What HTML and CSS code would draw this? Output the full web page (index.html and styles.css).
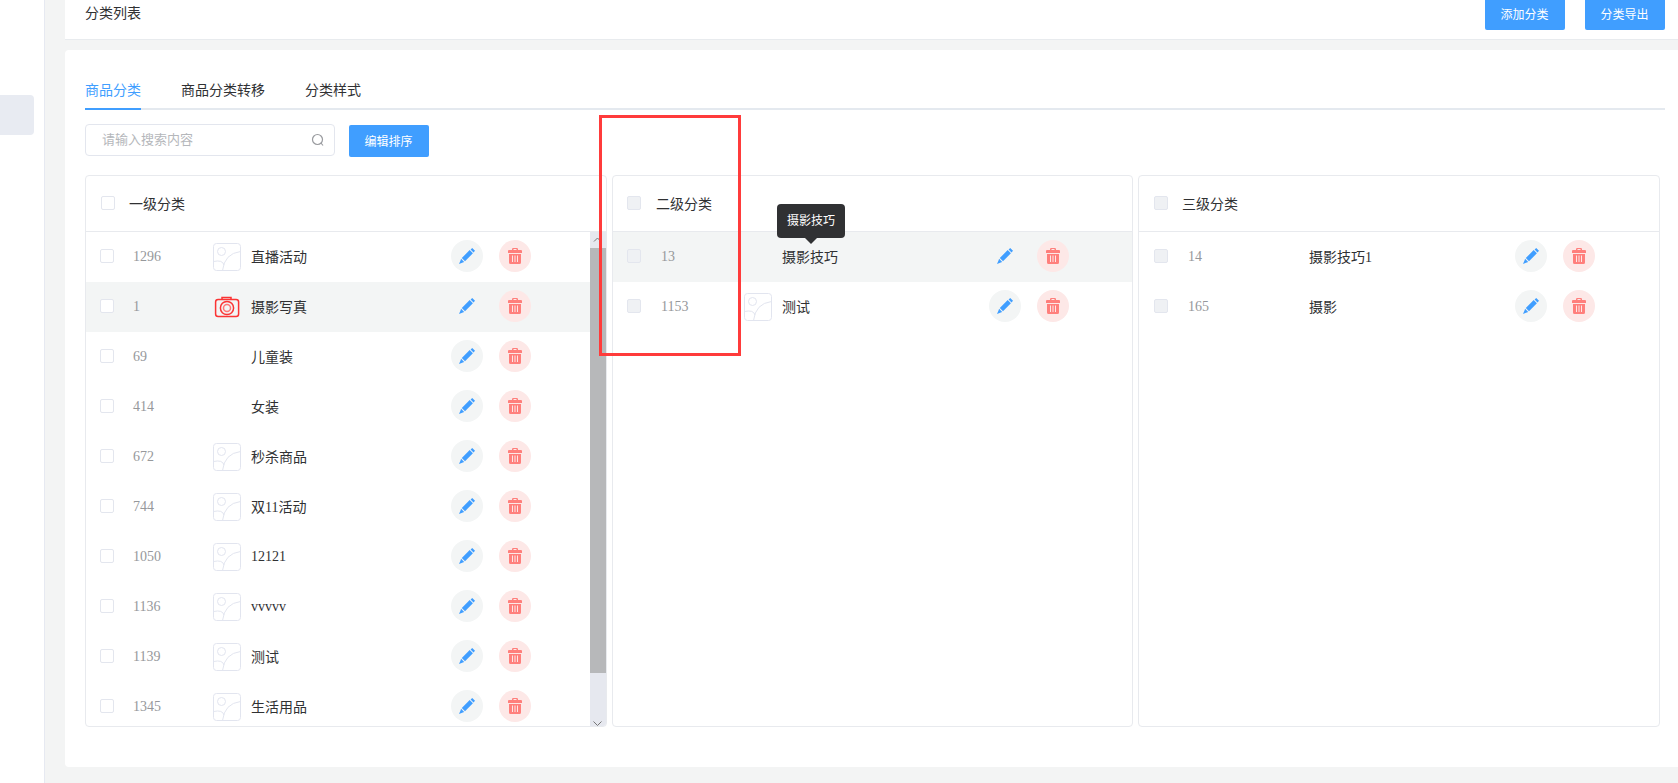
FILE: index.html
```html
<!DOCTYPE html>
<html lang="zh-CN">
<head>
<meta charset="utf-8">
<title>分类列表</title>
<link rel="stylesheet" href="styles.css">
</head>
<body>
<svg class="defs" aria-hidden="true">
  <symbol id="i-edit" viewBox="0 0 16 16"><path fill="currentColor" d="M13.200 0 16 2.800 14.500 4.400 11.600 1.500ZM10.700 2.100 13.900 5.300 6 13.200 2.800 10ZM2.100 10.800 5.200 13.900 3.800 14.400 0 16 1.600 12.200Z"/></symbol>
  <symbol id="i-trash" viewBox="0 0 14 16"><path fill="currentColor" fill-rule="evenodd" d="M4 2V1.200Q4 0 5.200 0H8.800Q10 0 10 1.200V2H13Q14 2 14 3V5H0V3Q0 2 1 2ZM5.500 2H8.500V1H5.500ZM1 6H13V14.500Q13 16 11.500 16H2.500Q1 16 1 14.500ZM4 7.500V14H5V7.500ZM6.500 7.500V14H7.500V7.500ZM9 7.500V14H10V7.500Z"/></symbol>
  <symbol id="i-img" viewBox="0 0 28 28"><g fill="none" stroke="#e2e5ef"><rect x=".5" y=".5" width="27" height="27" rx="3" fill="#fff"/><circle cx="8.500" cy="8.500" r="4"/><path d="M.5 18.500Q9.500 16.500 11 22M9.500 27.500Q11.500 10.500 27.500 8.500"/></g></symbol>
  <symbol id="i-camera" viewBox="0 0 28 28"><g fill="none" stroke="#fb3434" stroke-width="1.500"><rect x="2.600" y="6.600" width="23" height="17" rx="2.500"/><path d="M9 6V4.600H18V6"/><circle cx="14" cy="15" r="6.600"/><circle cx="14" cy="15" r="3.500" stroke="#ff7777"/></g></symbol>
</svg>
<div class="app">
  <aside class="side"><div class="side-active"></div></aside>
  <main class="content">
    <header class="head">
      <h1 class="title">分类列表</h1>
      <div class="head-actions"><button class="btn">添加分类</button><button class="btn">分类导出</button></div>
    </header>
    <section class="card">
      <nav class="tabs"><a class="tab on">商品分类</a><a class="tab">商品分类转移</a><a class="tab">分类样式</a></nav>
      <div class="tools">
        <div class="search"><span>请输入搜索内容</span><svg width="14" height="14" viewBox="0 0 14 14" fill="none" stroke="#999b9f" stroke-width="1.200"><circle cx="7.500" cy="6.500" r="5"/><path d="M11 10 13 12.500"/></svg></div>
        <button class="btn">编辑排序</button>
      </div>
      <div class="cols">
        <div class="col first">
          <div class="col-head"><i class="box"></i><span>一级分类</span></div>
          <div class="list" id="l1">
            <div class="bar"><svg width="16" height="16"><path d="M4 9.500 7.500 6 11 9.500" fill="none" stroke="#777"/></svg><div class="grip"></div><svg class="down" width="16" height="9"><path d="M3.500 4.500 7.500 8.500 11.500 4.500" fill="none" stroke="#777"/></svg></div>
          </div>
        </div>
        <div class="col second">
          <div class="col-head"><i class="box off"></i><span>二级分类</span></div>
          <div class="list" id="l2"></div>
        </div>
        <div class="col third">
          <div class="col-head"><i class="box off"></i><span>三级分类</span></div>
          <div class="list" id="l3"></div>
        </div>
      </div>
    </section>
  </main>
</div>
<div class="tip">摄影技巧</div>
<div class="mark"></div>
<script src="app.js"></script>
</body>
</html>
```
FILE: styles.css
```css
* { box-sizing: border-box; }
body { margin: 0; overflow: hidden; background: #f3f4f4; color: #303133; font: 14px/20px "Liberation Serif", "Noto Sans CJK SC", serif; }
.defs { position: absolute; width: 0; height: 0; }
.app { display: flex; height: 783px; }
.side { flex: none; width: 45px; padding-top: 95px; background: #fff; border-right: 1px solid #e6e9f1; }
.side-active { width: 34px; height: 40px; background: #e8ebf2; border-radius: 0 4px 4px 0; }
.content { flex: 1; padding-left: 20px; }
.head { display: flex; justify-content: space-between; height: 40px; padding: 0 13px 0 20px; background: #fff; border-bottom: 1px solid #e8ebee; }
.title { margin: 4px 0 0; font-size: 14px; font-weight: 400; line-height: 20px; }
.head-actions { display: flex; gap: 20px; margin-top: -2px; }
.btn { width: 80px; height: 32px; padding: 0 1px 0 0; border: 0; border-radius: 2px; background: #409eff; color: #fff; font: 12px/32px "Noto Sans CJK SC", sans-serif; }
.card { height: 717px; margin-top: 10px; padding: 25px 13px 0 20px; background: #fff; border-radius: 4px 0 0 4px; }
.tabs { display: flex; gap: 40px; height: 35px; border-bottom: 2px solid #e4e9ef; }
.tab { height: 35px; line-height: 32px; }
.tab.on { color: #409eff; border-bottom: 2px solid #409eff; }
.tools { display: flex; align-items: flex-start; gap: 14px; margin-top: 14px; height: 33px; }
.tools .btn { margin-top: 1px; }
.search { display: flex; justify-content: space-between; align-items: center; width: 250px; height: 32px; padding: 0 10px 0 16px; border: 1px solid #e3e6ee; border-radius: 4px; color: #b5b7bb; font-size: 13px; }
.cols { display: flex; gap: 5px; width: 1575px; margin-top: 18px; }
.col { width: 522px; height: 552px; overflow: hidden; border: 1px solid #e8eaee; border-radius: 4px; }
.col.second { width: 521px; }
.col-head { display: flex; align-items: center; gap: 14px; height: 56px; padding-left: 15px; border-bottom: 1px solid #e8eaee; }
.col-head .box { margin-bottom: 1px; }
.col-head span { margin-top: 2px; }
.second .col-head { padding-left: 14px; gap: 15px; }
.box { flex: none; width: 14px; height: 14px; background: #fff; border: 1px solid #e3e6ee; border-radius: 2px; }
.box.off { background: #eff1f4; }
.list { position: relative; height: 494px; overflow: hidden; }
.row { display: grid; grid-template-columns: 33px 80px 38px 200px 48px 32px; align-items: center; height: 50px; padding: 0 0 2px 14px; }
.third .row { padding-left: 15px; grid-template-columns: 34px 81px 40px 206px 48px 32px; }
.second .row { grid-template-columns: 34px 83px 38px 207px 48px 32px; }
.row.sel { background: #f3f5f5; }
.num { margin-top: 2px; color: #96989b; }
.pic { display: block; width: 28px; height: 28px; margin-top: 2px; }
.name { white-space: nowrap; margin-top: 4px; }
.name.latin { margin-top: 2px; }
.act { display: flex; align-items: center; justify-content: center; width: 32px; height: 32px; border-radius: 50%; }
.act.edit { background: #f3f5f5; color: #409eff; }
.act.del { background: #fde8e7; color: #ff7f7c; }
.bar { position: absolute; top: 0; right: 0; display: flex; flex-direction: column; width: 16px; height: 494px; background: #e6e8ef; }
.bar svg { flex: none; display: block; }
.grip { height: 425px; background: #b7b8ba; }
.bar .down { margin-top: auto; }
.tip { position: absolute; left: 777px; top: 204px; width: 68px; height: 34px; border-radius: 4px; background: #303133; color: #fff; font-size: 12px; line-height: 35px; text-align: center; }
.tip::after { content: ""; position: absolute; left: 28px; top: 34px; border: 6px solid transparent; border-top-color: #303133; border-bottom: 0; }
.mark { position: absolute; left: 599px; top: 115px; width: 142px; height: 241px; border: 3px solid #ff3b3b; }
```
FILE: app.js
```js
const lists = {
  l1: [["1296", "直播活动", "img"], ["1", "摄影写真", "camera", true], ["69", "儿童装"], ["414", "女装"], ["672", "秒杀商品", "img"], ["744", "双11活动", "img"], ["1050", "12121", "img"], ["1136", "vvvvv", "img"], ["1139", "测试", "img"], ["1345", "生活用品", "img"]],
  l2: [["13", "摄影技巧", "", true], ["1153", "测试", "img"]],
  l3: [["14", "摄影技巧1"], ["165", "摄影"]]
};
for (const [id, rows] of Object.entries(lists)) {
  const html = rows.map(([num, name, pic, sel]) => `<div class="row${sel ? " sel" : ""}">
    <i class="box${id === "l1" ? "" : " off"}"></i><span class="num">${num}</span>
    <span>${pic ? `<svg class="pic"><use href="#i-${pic}"/></svg>` : ""}</span><span class="name${/^\w+$/.test(name) ? " latin" : ""}">${name}</span>
    <span class="act edit"><svg width="16" height="16"><use href="#i-edit"/></svg></span>
    <span class="act del"><svg width="14" height="16"><use href="#i-trash"/></svg></span></div>`).join("");
  document.getElementById(id).insertAdjacentHTML("beforeend", html);
}
```
